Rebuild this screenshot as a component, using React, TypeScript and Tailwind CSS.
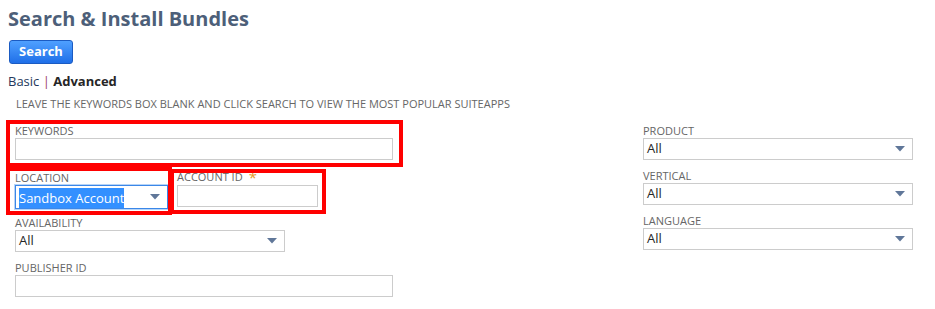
import React from 'react';

function Arrow() {
  return (
    <svg width="10" height="6" viewBox="0 0 10 6" className="shrink-0">
      <polygon points="0,0 10,0 5,5.5" fill="#607799" />
    </svg>
  );
}

function Label({ children }: { children: React.ReactNode }) {
  return <div className="pt-px text-[11px] leading-[14px] uppercase text-[#666]">{children}</div>;
}

function TextBox({ className = '' }: { className?: string }) {
  return <div className={`h-[22px] border border-[#cccccc] bg-white ${className}`} />;
}

function Select({ value, className = '' }: { value: string; className?: string }) {
  return (
    <div className={`h-[22px] border border-[#cccccc] bg-white flex items-center pl-[3px] pr-[7px] ${className}`}>
      <span className="flex-1 text-[13px] text-[#262626]">{value}</span>
      <Arrow />
    </div>
  );
}

export default function App() {
  return (
    <div className="relative w-[935px] h-[309px] overflow-hidden bg-white font-['Open_Sans',sans-serif]">
      <h1 className="pl-2 pt-[6px] text-[20px] leading-[26px] font-bold text-[#4d5f79]">Search &amp; Install Bundles</h1>

      <button className="ml-[9px] mt-2 h-6 w-16 rounded-[3px] border border-[#1b5bc2] bg-gradient-to-b from-[#4fa0ff] to-[#1f6fe8] text-[13px] font-bold text-white">
        Search
      </button>

      <div className="mt-[9px] pl-2 text-[13px] leading-4">
        <span className="text-[#24385b]">Basic</span>
        <span className="text-[#9b3a63]"> | </span>
        <span className="font-bold text-[#262626]">Advanced</span>
      </div>

      <div className="mt-2 pl-4 text-[11px] leading-[14px] text-[#666]">
        LEAVE THE KEYWORDS BOX BLANK AND CLICK SEARCH TO VIEW THE MOST POPULAR SUITEAPPS
      </div>

      <div className="mt-[12px] flex">
        {/* left column */}
        <div className="ml-[15px] w-[378px]">
          <Label>Keywords</Label>
          <TextBox />

          <div className="mt-[8px] flex">
            <div className="w-[153px]">
              <div className="pt-[2px]">
                <Label>Location</Label>
              </div>
              <div className="h-[24px] border border-[#3b87e8] bg-white flex items-center pl-[3px] pr-[7px] shadow-[0_0_0_1px_#b7d4f7]">
                <span className="flex-1 leading-[18px]">
                  <span className="bg-[#3390ff] py-px text-[13px] text-white">Sandbox Account</span>
                </span>
                <Arrow />
              </div>
            </div>
            <div className="ml-[9px] w-[141px]">
              <div className="pt-[2px] flex items-start text-[11px] leading-[14px] uppercase text-[#666]">
                ACCOUNT ID
                <span className="ml-[6px] text-[15px] leading-[14px] text-[#e69a2b]">*</span>
              </div>
              <TextBox className="mt-px" />
            </div>
          </div>

          <div className="mt-[6px] w-[270px]">
            <Label>Availability</Label>
            <Select value="All" />
          </div>

          <div className="mt-2">
            <Label>Publisher ID</Label>
            <TextBox />
          </div>
        </div>

        {/* right column */}
        <div className="ml-auto mr-[22px] w-[270px]">
          <Label>Product</Label>
          <Select value="All" />
          <div className="mt-2">
            <Label>Vertical</Label>
            <Select value="All" />
          </div>
          <div className="mt-2">
            <Label>Language</Label>
            <Select value="All" />
          </div>
        </div>
      </div>

      {/* red annotation boxes */}
      <div className="pointer-events-none absolute left-[6px] top-[120px] h-[47px] w-[397px] border-4 border-[#ff0000]" />
      <div className="pointer-events-none absolute left-[6px] top-[167px] h-[48px] w-[166px] border-4 border-[#ff0000]" />
      <div className="pointer-events-none absolute left-[170px] top-[169px] h-[45px] w-[156px] border-4 border-[#ff0000]" />
    </div>
  );
}
